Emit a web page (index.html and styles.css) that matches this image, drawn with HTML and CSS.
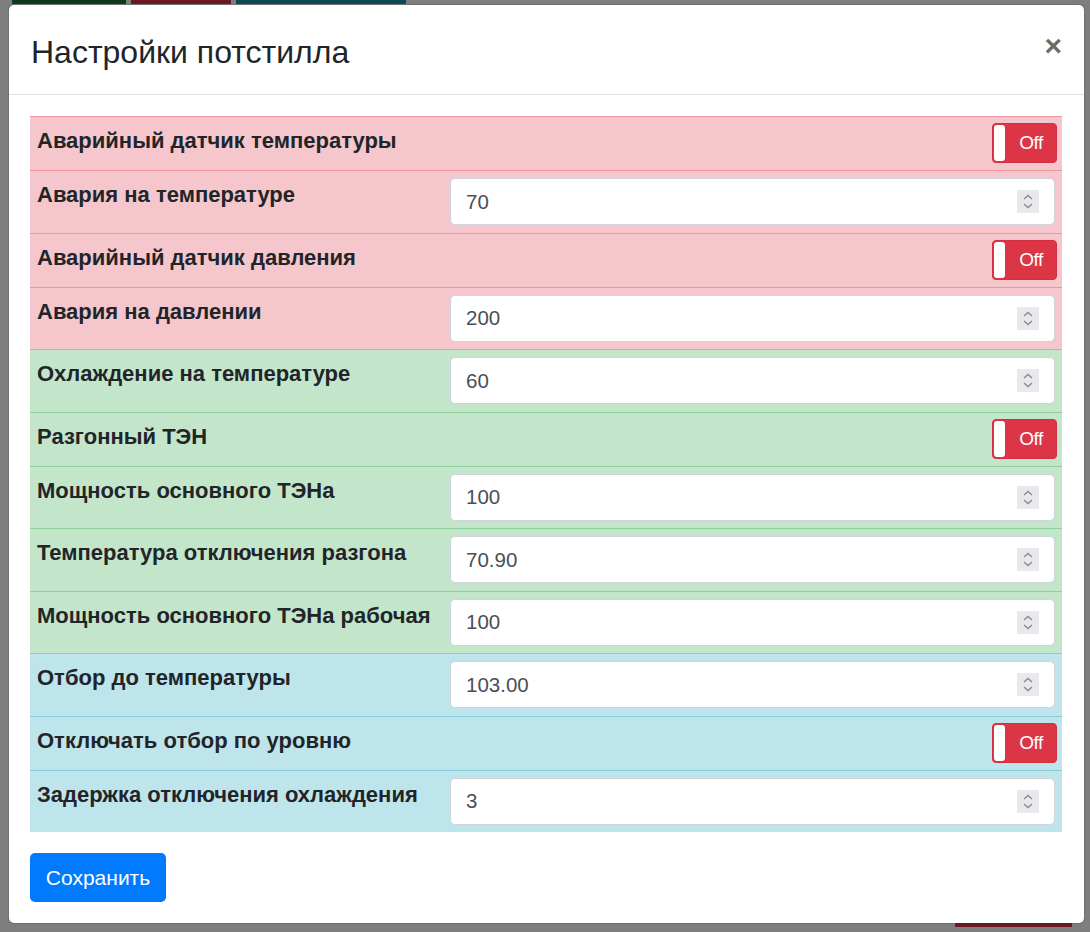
FILE: index.html
```html
<!DOCTYPE html>
<html lang="ru">
<head>
<meta charset="utf-8">
<title>Настройки потстилла</title>
<link rel="stylesheet" href="styles.css">
</head>
<body>
<div class="page-strip">
  <span class="strip strip-green"></span>
  <span class="strip strip-red"></span>
  <span class="strip strip-teal"></span>
</div>
<div class="modal">
  <div class="modal-header">
    <h5 class="modal-title">Настройки потстилла</h5>
    <button class="close" type="button">×</button>
  </div>
  <div class="modal-body">
    <table class="settings">
      <tr class="row-danger row-toggle">
        <td class="label">Аварийный датчик температуры</td>
        <td class="ctrl ctrl-toggle"><span class="toggle"><span class="handle"></span><span class="toggle-text">Off</span></span></td>
      </tr>
      <tr class="row-danger">
        <td class="label">Авария на температуре</td>
        <td class="ctrl"><div class="num"><span class="val">70</span><svg class="spin" width="22" height="23" viewBox="0 0 22 23"><rect width="22" height="23" fill="#e9e9ed"/><path d="M7 9 L11 5.5 L15 9 M7 14 L11 17.5 L15 14" fill="none" stroke="#8a8a8f" stroke-width="1.4"/></svg></div></td>
      </tr>
      <tr class="row-danger row-toggle">
        <td class="label">Аварийный датчик давления</td>
        <td class="ctrl ctrl-toggle"><span class="toggle"><span class="handle"></span><span class="toggle-text">Off</span></span></td>
      </tr>
      <tr class="row-danger">
        <td class="label">Авария на давлении</td>
        <td class="ctrl"><div class="num"><span class="val">200</span><svg class="spin" width="22" height="23" viewBox="0 0 22 23"><rect width="22" height="23" fill="#e9e9ed"/><path d="M7 9 L11 5.5 L15 9 M7 14 L11 17.5 L15 14" fill="none" stroke="#8a8a8f" stroke-width="1.4"/></svg></div></td>
      </tr>
      <tr class="row-success">
        <td class="label">Охлаждение на температуре</td>
        <td class="ctrl"><div class="num"><span class="val">60</span><svg class="spin" width="22" height="23" viewBox="0 0 22 23"><rect width="22" height="23" fill="#e9e9ed"/><path d="M7 9 L11 5.5 L15 9 M7 14 L11 17.5 L15 14" fill="none" stroke="#8a8a8f" stroke-width="1.4"/></svg></div></td>
      </tr>
      <tr class="row-success row-toggle">
        <td class="label">Разгонный ТЭН</td>
        <td class="ctrl ctrl-toggle"><span class="toggle"><span class="handle"></span><span class="toggle-text">Off</span></span></td>
      </tr>
      <tr class="row-success">
        <td class="label">Мощность основного ТЭНа</td>
        <td class="ctrl"><div class="num"><span class="val">100</span><svg class="spin" width="22" height="23" viewBox="0 0 22 23"><rect width="22" height="23" fill="#e9e9ed"/><path d="M7 9 L11 5.5 L15 9 M7 14 L11 17.5 L15 14" fill="none" stroke="#8a8a8f" stroke-width="1.4"/></svg></div></td>
      </tr>
      <tr class="row-success">
        <td class="label">Температура отключения разгона</td>
        <td class="ctrl"><div class="num"><span class="val">70.90</span><svg class="spin" width="22" height="23" viewBox="0 0 22 23"><rect width="22" height="23" fill="#e9e9ed"/><path d="M7 9 L11 5.5 L15 9 M7 14 L11 17.5 L15 14" fill="none" stroke="#8a8a8f" stroke-width="1.4"/></svg></div></td>
      </tr>
      <tr class="row-success">
        <td class="label">Мощность основного ТЭНа рабочая</td>
        <td class="ctrl"><div class="num"><span class="val">100</span><svg class="spin" width="22" height="23" viewBox="0 0 22 23"><rect width="22" height="23" fill="#e9e9ed"/><path d="M7 9 L11 5.5 L15 9 M7 14 L11 17.5 L15 14" fill="none" stroke="#8a8a8f" stroke-width="1.4"/></svg></div></td>
      </tr>
      <tr class="row-info">
        <td class="label">Отбор до температуры</td>
        <td class="ctrl"><div class="num"><span class="val">103.00</span><svg class="spin" width="22" height="23" viewBox="0 0 22 23"><rect width="22" height="23" fill="#e9e9ed"/><path d="M7 9 L11 5.5 L15 9 M7 14 L11 17.5 L15 14" fill="none" stroke="#8a8a8f" stroke-width="1.4"/></svg></div></td>
      </tr>
      <tr class="row-info row-toggle">
        <td class="label">Отключать отбор по уровню</td>
        <td class="ctrl ctrl-toggle"><span class="toggle"><span class="handle"></span><span class="toggle-text">Off</span></span></td>
      </tr>
      <tr class="row-info">
        <td class="label">Задержка отключения охлаждения</td>
        <td class="ctrl"><div class="num"><span class="val">3</span><svg class="spin" width="22" height="23" viewBox="0 0 22 23"><rect width="22" height="23" fill="#e9e9ed"/><path d="M7 9 L11 5.5 L15 9 M7 14 L11 17.5 L15 14" fill="none" stroke="#8a8a8f" stroke-width="1.4"/></svg></div></td>
      </tr>
    </table>
    <button class="btn-save" type="button">Сохранить</button>
  </div>
</div>
<div class="page-bottom"><span class="strip strip-red strip-bottom"></span></div>
</body>
</html>
```

FILE: styles.css
```css
* { box-sizing: border-box; }

html, body {
  margin: 0;
  padding: 0;
}

body {
  background: #7e7e7e;
  font-family: "Liberation Sans", Arial, sans-serif;
  color: #212529;
  width: 1090px;
  height: 932px;
  overflow: hidden;
}

.page-strip {
  display: flex;
  height: 5px;
  padding-left: 12px;
  gap: 5px;
}

.strip {
  display: block;
  height: 4px;
}

.strip-green { width: 114px; background: #0d3a1b; }
.strip-red { width: 100px; background: #6c1820; }
.strip-teal { width: 170px; background: #0b4a55; }

.page-bottom {
  padding-left: 955px;
}

.strip-bottom {
  width: 117px;
  height: 4px;
  background: #6c1820;
}

.modal {
  margin-left: 9px;
  width: 1075px;
  height: 918px;
  background: #fff;
  border-radius: 5px;
  box-shadow: 0 0 2px rgba(0, 0, 0, 0.35);
  display: flex;
  flex-direction: column;
}

.modal-header {
  height: 90px;
  border-bottom: 1px solid #dee2e6;
  display: flex;
  align-items: center;
  justify-content: space-between;
  padding: 6px 22px 0 22px;
}

.modal-title {
  margin: 0;
  font-size: 32px;
  font-weight: 400;
  color: #212529;
  line-height: 1.2;
}

.close {
  border: 0;
  background: none;
  padding: 0;
  font-family: "Liberation Sans", Arial, sans-serif;
  font-size: 30px;
  font-weight: 700;
  color: #6b6b6b;
  line-height: 1;
  margin-top: -14px;
}

.modal-body {
  padding: 21px 22px 21px 21px;
  display: flex;
  flex-direction: column;
  align-items: flex-start;
  gap: 21px;
}

.settings {
  width: 1032px;
  border-collapse: collapse;
  border-spacing: 0;
}

.settings td {
  vertical-align: top;
  border-top: 1px solid transparent;
}

.row-danger td { background: #f5c6cb; border-top-color: #ed969e; }
.row-success td { background: #c3e6cb; border-top-color: #8fd19e; }
.row-info td { background: #bee5eb; border-top-color: #86cfda; }

.label {
  width: 412px;
  padding: 9px 6px 8px 7px;
  font-size: 22px;
  font-weight: 700;
  line-height: 29px;
  color: #212529;
  white-space: nowrap;
}

.ctrl {
  padding: 7px 7px 7.5px 8px;
}

.ctrl-toggle {
  padding: 6px 5px 7px 8px;
  text-align: right;
}

.num {
  height: 47px;
  border: 1px solid #ced4da;
  border-radius: 5px;
  background: #fff;
  display: flex;
  align-items: center;
  justify-content: space-between;
  padding: 0 15px 0 15px;
}

.val {
  font-size: 20.5px;
  color: #495057;
}

.spin {
  display: block;
}

.toggle {
  display: inline-flex;
  align-items: stretch;
  width: 65px;
  height: 40px;
  background: #dc3545;
  border: 1px solid #d42f40;
  border-radius: 4px;
  padding: 1px;
  vertical-align: top;
}

.handle {
  width: 11px;
  background: #fff;
  border-radius: 3px;
}

.toggle-text {
  flex: 1;
  display: flex;
  align-items: center;
  justify-content: center;
  color: #fff;
  font-size: 19px;
  letter-spacing: -0.5px;
  padding-left: 2px;
}

.btn-save {
  border: 0;
  background: #007bff;
  color: #fff;
  border-radius: 5px;
  width: 136px;
  height: 49px;
  font-family: "Liberation Sans", Arial, sans-serif;
  font-size: 21px;
  padding: 0;
  margin-left: 0;
}
```
